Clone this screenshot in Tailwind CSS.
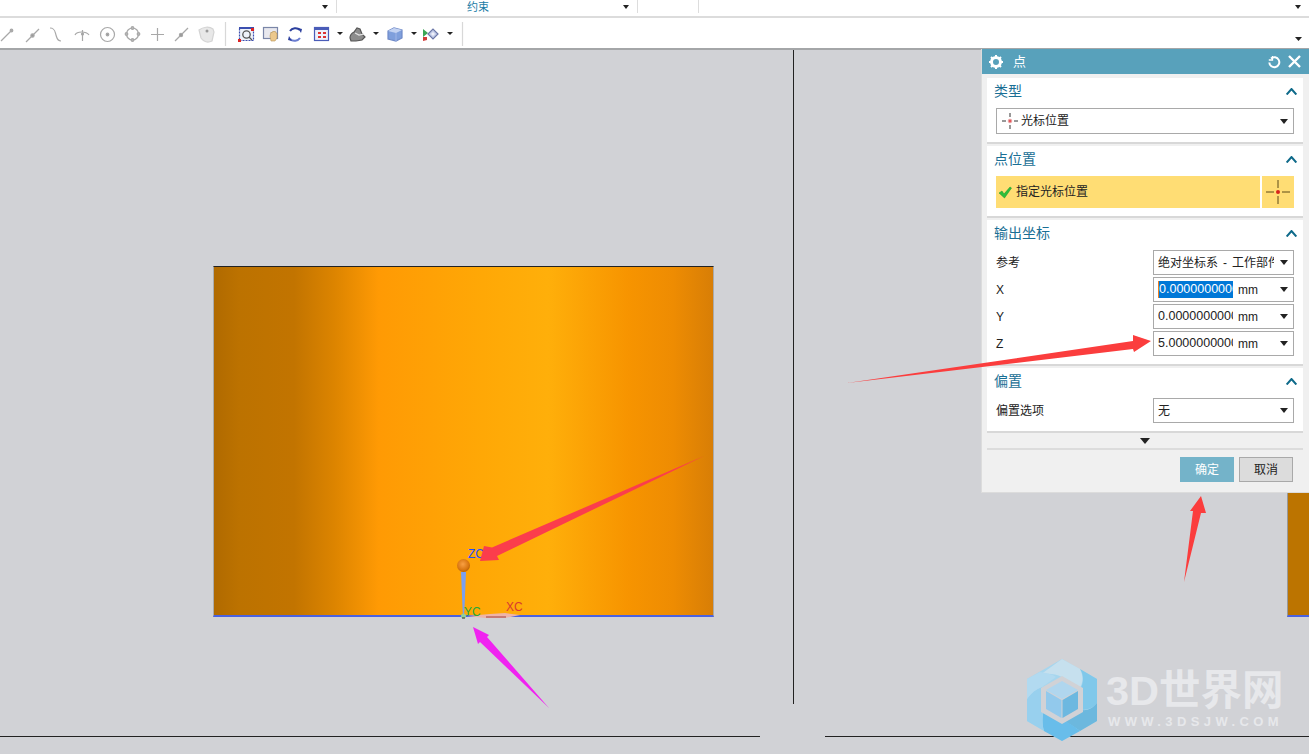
<!DOCTYPE html>
<html><head><meta charset="utf-8"><script src="https://cdn.jsdelivr.net/npm/@tailwindcss/browser@4"></script></head>
<body class="w-[1309px] h-[754px] overflow-hidden bg-[#d1d2d6] font-['Liberation_Sans','Noto_Sans_CJK_SC',sans-serif] text-[12px] text-[#222]">
<div class="relative w-[1309px] h-[754px] flex flex-col">
 <!-- ribbon -->
 <header class="h-[50px] bg-white border-b-2 border-[#a4a6a8] flex flex-col shrink-0">
  <div class="h-[18px] border-b-2 border-[#dcdcdc] flex text-[11px]">
   <div class="w-[337px] h-[13px] border-r border-[#ddd] flex items-center justify-end pr-[8px]"><svg width="6" height="4" viewBox="0 0 6 4"><path d="M0 0h6L3 4z" fill="#222"/></svg></div>
   <div class="w-[301px] h-[13px] border-r border-[#ddd] flex items-center justify-end pr-[8px] relative"><span class="absolute left-[130px] top-[1px] text-[#1b7ca6] leading-[13px]">约束</span><svg width="6" height="4" viewBox="0 0 6 4"><path d="M0 0h6L3 4z" fill="#222"/></svg></div>
   <div class="w-[61px] h-[13px] border-r border-[#ddd]"></div>
   <div class="flex-1 h-[13px] flex items-center justify-end pr-[8px]"><svg width="6" height="4" viewBox="0 0 6 4"><path d="M0 0h6L3 4z" fill="#222"/></svg></div>
  </div>
  <div class="flex-1 relative">
   <svg class="block" width="480" height="30" viewBox="0 0 480 30" fill="none" stroke="#a8a8a8" stroke-width="1.200">
    <g transform="translate(0,-18)">
     <path d="M1 41 12 30"/><circle cx="11.500" cy="30.500" r="1.300" fill="#aaa"/>
     <path d="M26 42 39 29"/><circle cx="32.500" cy="35.500" r="1.600" fill="#999"/>
     <path d="M50 28c5 0 5 4 6 7s1 6 5 6"/>
     <path d="M75 35c2-4 11-4 14 0M82.500 30v11"/><circle cx="82.500" cy="34" r="1" fill="#999"/>
     <circle cx="107.500" cy="34.500" r="7"/><circle cx="107.500" cy="34.500" r="1.300" fill="#999"/>
     <circle cx="132.500" cy="34" r="6"/><circle cx="132.500" cy="28" r="1.300" fill="#bbb"/><circle cx="132.500" cy="40" r="1.300" fill="#bbb"/><circle cx="126.500" cy="34" r="1.300" fill="#bbb"/><circle cx="138.500" cy="34" r="1.300" fill="#bbb"/>
     <path d="M151 34.500h13M157.500 28v13"/>
     <path d="M175 41 188 28"/><circle cx="181" cy="35" r="1.600" fill="#999"/>
     <path d="M199 30c4-3 10-4 14-1l1 3-2 9c-4 2-8 1-11-3z" fill="#e8e8e8" stroke="#d4d4d4"/><circle cx="207" cy="31" r="1.500" fill="#999" stroke="none"/>
     <path d="M225.500 22v24" stroke="#d8d8d8"/>
     <rect x="239.500" y="27.500" width="14" height="13" fill="#eef2fa" stroke="#3c4fb0" stroke-dasharray="2 1"/><rect x="239" y="27" width="15" height="2" fill="#3c4fb0" stroke="none"/><circle cx="246.500" cy="34.500" r="3.700" stroke="#555" stroke-width="1.300"/><path d="m249 37 3 3" stroke="#555" stroke-width="1.300"/><rect x="238" y="39" width="3" height="3" fill="#d22" stroke="none"/><rect x="251" y="28" width="3" height="3" fill="#d22" stroke="none"/>
     <rect x="263.500" y="27.500" width="14" height="11" fill="#e8e8ee" stroke="#7a86a8"/><path d="M270 36l1-4 1 1 1-2 1 1 1-1 1 2 1 0 0 5-2 3h-4z" fill="#ecc88c" stroke="#b99555" stroke-width=".6"/>
     <path d="M290 31c2-3 7-4 10-1" stroke="#2b3f9e" stroke-width="2"/><path d="M300 38c-2 3-7 4-10 1" stroke="#6a7dd0" stroke-width="2"/><path d="M298 28l4 1-1 4zM292 41l-4-1 1-4z" fill="#2b3f9e" stroke="none"/>
     <rect x="314.500" y="27.500" width="14" height="13" fill="#eef0fa" stroke="#4a5cb8"/><rect x="314" y="27" width="15" height="3" fill="#4a5cb8" stroke="none"/><path d="M318 32h3v2h-3zM323 32h3v2h-3zM318 36h3v2h-3zM323 36h3v2h-3z" fill="#d33" stroke="none"/>
     <path d="M337 32h6l-3 3z" fill="#222" stroke="none"/>
     <path d="M350 38c0-3 2-5 4-6l3-4 3 1 2 5 3 3-3 3-6 1h-5z" fill="#8c8c8c" stroke="#555"/><path d="M355 33l4 2 5-1" stroke="#e4e4e4"/>
     <path d="M373 32h6l-3 3z" fill="#222" stroke="none"/>
     <path d="M388 31l6-3 8 2v8l-6 3-8-2z" fill="#7f9fdc" stroke="#6f8ac8"/><path d="M388 31l8 2 6-3-8-2z" fill="#c4d3f2" stroke="none"/><path d="M396 33v8" stroke="#9bb2e4"/>
     <path d="M411 32h6l-3 3z" fill="#222" stroke="none"/>
     <path d="M423 29l5 4-5 4z" fill="#3aa655" stroke="none"/><path d="M423 37l4 0 0 3-4 1z" fill="#d23a3a" stroke="none"/><path d="M428 34l5-5 5 5-5 5z" fill="#c4cde8" stroke="#6c78a8"/><path d="M431 34l2-2 2 2-2 2z" fill="#eef0fa" stroke="none"/>
     <path d="M447 32h6l-3 3z" fill="#222" stroke="none"/>
     <path d="M462.500 22v24" stroke="#d8d8d8"/>
    </g>
   </svg>
   <svg class="absolute right-[7px] top-[19px]" width="7" height="4" viewBox="0 0 7 4"><path d="M0 0h7L3.500 4z" fill="#222"/></svg>
  </div>
 </header>

 <!-- viewport -->
 <main class="relative flex-1">
  <div class="absolute left-[213px] top-[216px] w-[501px] h-[351px] border-t border-t-[#222] border-x border-x-[#aaa] border-b-2 border-b-[#4a62e0] bg-[linear-gradient(90deg,#b06a00_0%,#bc7200_5%,#c27400_16%,#dc8400_24%,#ff9a04_33%,#ffa806_54%,#ffaf0a_67%,#f79400_83%,#ee8c02_92%,#d87e06_100%)]"></div>
  <div class="absolute left-[793px] top-0 w-px h-[654px] bg-[#222]"></div>
  <div class="absolute left-[1287px] top-[442px] w-[22px] h-[125px] border-l border-[#999] border-b-2 border-b-[#4a62e0] bg-[#bc7400]"></div>
  <div class="absolute left-0 top-[686px] w-[760px] h-px bg-[#222]"></div>
  <div class="absolute left-[825px] top-[686px] w-[484px] h-px bg-[#222]"></div>

  <!-- watermark -->
  <svg class="absolute left-[1026px] top-[609px]" width="72" height="82" viewBox="0 0 72 82">
   <path d="M36 0 71 20V62L36 82 1 62V20z" fill="#a6d6ee"/>
   <path d="M36 0 54 10C58 18 57 26 52 31L36 18C28 14 20 14 14 16z" fill="#c6e0ee"/>
   <path d="M54 10 71 20V44C66 50 60 52 52 50L54 30C58 24 58 16 54 10z" fill="#80c8ea"/>
   <path d="M71 44V62L54 72C46 66 38 62 34 60L52 50C60 53 66 50 71 44z" fill="#6cb8de"/>
   <path d="M54 72 36 82 18 72C16 66 16 58 18 50L34 60C42 63 48 67 54 72z" fill="#68bdea"/>
   <path d="M18 72 1 62V40C5 34 10 30 16 28L18 50C16 58 16 66 18 72z" fill="#98d0ee"/>
   <path d="M1 40V20L14 13C20 14 26 15 30 18L16 28C10 30 5 34 1 40z" fill="#b2daf0"/>
   <path d="M36 17 57 29V53L36 65 15 53V29z" fill="#d1d2d6"/>
   <path d="M36 22 52 31 36 40 20 31z" fill="#b0d6ee"/><path d="M20 32 35.500 41V59L20 50z" fill="#92c9ec"/><path d="M52 32 36.500 41V59L52 50z" fill="#6cb8e0"/>
  </svg>
  <div class="absolute left-[1106px] top-[617px] text-[41.500px] leading-[48px] font-bold text-[#e7e8eb] whitespace-nowrap">3D世界网</div>
  <div class="absolute left-[1108px] top-[664px] text-[13px] leading-[16px] font-bold tracking-[4.400px] text-[#e7e8eb] whitespace-nowrap">WWW.3DSJW.COM</div>

  <!-- triad -->
  <svg class="absolute left-0 top-0 pointer-events-none" width="1309" height="704" viewBox="0 50 1309 704">
   <defs><radialGradient id="b" cx=".45" cy=".4" r=".65"><stop offset="0" stop-color="#f9a043"/><stop offset=".7" stop-color="#d87510"/><stop offset="1" stop-color="#a85a08"/></radialGradient></defs>
   <path d="M461 572h5l-1.500 36-.5 8h-1l-.5-8z" fill="#7aa0ef"/>
   <circle cx="463.500" cy="565.500" r="6.500" fill="url(#b)"/>
   <path d="M467 616 490 614 505 613 520 615 505 618 485 618z" fill="#eeb4a8"/><path d="M486 617h20" stroke="#a04040" stroke-width="1"/>
   <circle cx="463.500" cy="616" r="2.500" fill="#8fcf9a"/><path d="M462 618h3" stroke="#333"/>
  </svg>
  <span class="absolute left-[468px] top-[497px] text-[12px] leading-[14px] text-[#1f4dff]">ZC</span>
  <span class="absolute left-[464px] top-[555px] text-[12px] leading-[14px] text-[#25a83a]">YC</span>
  <span class="absolute left-[506px] top-[550px] text-[12px] leading-[14px] text-[#d83a30]">XC</span>

  <!-- dialog -->
  <section class="absolute left-[981px] top-[-1px] w-[328px] h-[444px] bg-[#f0f0f0] border-l border-[#dcdcdc] border-b border-b-[#dcdcdc] z-10 flex flex-col">
   <div class="h-[25px] bg-[#58a1bb] flex items-center text-white text-[13px] pl-[7px] pr-[8px] shrink-0">
    <svg width="14" height="14" viewBox="0 0 14 14"><circle cx="7" cy="7" r="4.500" fill="none" stroke="#fff" stroke-width="3"/><path d="M7 0v2M7 12v2M0 7h2M12 7h2M2 2l1.500 1.500M10.500 10.500 12 12M12 2l-1.500 1.500M2 12l1.500-1.500" stroke="#fff" stroke-width="2"/></svg>
    <span class="ml-[10px]">点</span>
    <svg class="ml-auto" width="14" height="14" viewBox="0 0 14 14" fill="none" stroke="#fff" stroke-width="2"><path d="M4 3.500a5 5 0 1 1-1.700 4"/><path d="M5.500 1v4H1.800" stroke-width="1.300"/></svg>
    <svg class="ml-[7px]" width="13" height="13" viewBox="0 0 13 13" stroke="#fff" stroke-width="2.400"><path d="M1 1l11 11M12 1 1 12"/></svg>
   </div>
   <div class="flex flex-col pl-[5px] pr-[6px] pt-[4px] flex-1">
    <!-- 类型 -->
    <div class="h-[66px] bg-white border-b-2 border-[#d8d8d8] px-[9px] flex flex-col">
     <div class="h-[26px] flex items-center justify-between text-[#1a6f95] text-[14px] ml-[-2px] mr-[-3px]"><span>类型</span><svg width="11" height="7" viewBox="0 0 11 7" fill="none" stroke="#0f6a8a" stroke-width="2"><path d="M.7 6.500 5.500 1l4.800 5.500"/></svg></div>
     <div class="mt-[4px] h-[26px] w-[298px] border border-[#a9a9a9] flex items-center pl-[5px] pr-[5px]">
      <svg width="16" height="16" viewBox="0 0 16 16" stroke="#333"><path d="M0 8h4M12 8h4M8 0v4M8 12v4"/><circle cx="8" cy="8" r="1.800" fill="#e8555a" stroke="#e8a0a0"/></svg>
      <span class="ml-[3px]">光标位置</span>
      <svg class="ml-auto" width="8" height="5" viewBox="0 0 8 5"><path d="M0 0h8L4 5z" fill="#222"/></svg>
     </div>
    </div>
    <!-- 点位置 -->
    <div class="mt-[2px] h-[72px] bg-white border-b-2 border-[#d8d8d8] px-[9px] flex flex-col">
     <div class="h-[26px] flex items-center justify-between text-[#1a6f95] text-[14px] ml-[-2px] mr-[-3px]"><span>点位置</span><svg width="11" height="7" viewBox="0 0 11 7" fill="none" stroke="#0f6a8a" stroke-width="2"><path d="M.7 6.500 5.500 1l4.800 5.500"/></svg></div>
     <div class="mt-[4px] h-[32px] flex gap-[2px] w-[298px]">
      <div class="flex-1 bg-[#ffdd74] flex items-center pl-[2px]">
       <svg width="14" height="13" viewBox="0 0 14 13"><path d="M1 7l3-2 2 3 6-7 1.500 1-7 10z" fill="#2fbf3a" stroke="#14922a" stroke-width=".5"/></svg>
       <span class="ml-[4px]">指定光标位置</span>
      </div>
      <div class="w-[32px] bg-[#ffdd74] flex items-center justify-center"><svg width="26" height="26" viewBox="0 0 26 26" stroke="#5c4a18"><path d="M1 13h8M17 13h8M13 1v8M13 17v8"/><circle cx="13" cy="13" r="2" fill="#d8241c" stroke="none"/></svg></div>
     </div>
    </div>
    <!-- 输出坐标 -->
    <div class="mt-[2px] h-[146px] bg-white border-b-2 border-[#d8d8d8] px-[9px] flex flex-col">
     <div class="h-[26px] flex items-center justify-between text-[#1a6f95] text-[14px] ml-[-2px] mr-[-3px]"><span>输出坐标</span><svg width="11" height="7" viewBox="0 0 11 7" fill="none" stroke="#0f6a8a" stroke-width="2"><path d="M.7 6.500 5.500 1l4.800 5.500"/></svg></div>
     <div class="flex flex-col gap-[2px] mt-[4px]">
      <div class="flex items-center justify-between"><span>参考</span>
       <div class="w-[141px] h-[25px] border border-[#a9a9a9] flex items-center pl-[4px] pr-[5px] overflow-hidden"><span class="w-[116px] overflow-hidden whitespace-nowrap">绝对坐标系<span class="mx-[5px]">-</span>工作部件</span><svg class="ml-auto" width="8" height="5" viewBox="0 0 8 5"><path d="M0 0h8L4 5z" fill="#222"/></svg></div></div>
      <div class="flex items-center justify-between"><span>X</span>
       <div class="w-[141px] h-[25px] border border-[#a9a9a9] flex items-center pl-[4px] pr-[5px]"><span class="w-[75px] h-[17px] leading-[17px] overflow-hidden bg-[#0078d7] text-white border-l border-l-[#f08020] text-[12.500px] whitespace-nowrap">0.00000000000</span><span class="ml-[5px]">mm</span><svg class="ml-auto" width="8" height="5" viewBox="0 0 8 5"><path d="M0 0h8L4 5z" fill="#222"/></svg></div></div>
      <div class="flex items-center justify-between"><span>Y</span>
       <div class="w-[141px] h-[25px] border border-[#a9a9a9] flex items-center pl-[4px] pr-[5px]"><span class="w-[75px] overflow-hidden text-[12.500px] whitespace-nowrap">0.00000000000</span><span class="ml-[5px]">mm</span><svg class="ml-auto" width="8" height="5" viewBox="0 0 8 5"><path d="M0 0h8L4 5z" fill="#222"/></svg></div></div>
      <div class="flex items-center justify-between"><span>Z</span>
       <div class="w-[141px] h-[25px] border border-[#a9a9a9] flex items-center pl-[4px] pr-[5px]"><span class="w-[75px] overflow-hidden text-[12.500px] whitespace-nowrap">5.00000000000</span><span class="ml-[5px]">mm</span><svg class="ml-auto" width="8" height="5" viewBox="0 0 8 5"><path d="M0 0h8L4 5z" fill="#222"/></svg></div></div>
     </div>
    </div>
    <!-- 偏置 -->
    <div class="mt-[2px] h-[65px] bg-white border-b-2 border-[#d8d8d8] px-[9px] flex flex-col">
     <div class="h-[26px] flex items-center justify-between text-[#1a6f95] text-[14px] ml-[-2px] mr-[-3px]"><span>偏置</span><svg width="11" height="7" viewBox="0 0 11 7" fill="none" stroke="#0f6a8a" stroke-width="2"><path d="M.7 6.500 5.500 1l4.800 5.500"/></svg></div>
     <div class="flex items-center justify-between mt-[4px]"><span>偏置选项</span>
      <div class="w-[141px] h-[25px] border border-[#a9a9a9] flex items-center pl-[4px] pr-[5px]"><span>无</span><svg class="ml-auto" width="8" height="5" viewBox="0 0 8 5"><path d="M0 0h8L4 5z" fill="#222"/></svg></div></div>
    </div>
    <div class="h-[17px] border-b-2 border-[#dcdcdc] flex items-center justify-center pr-[1px] pt-[1px]"><svg width="10" height="6" viewBox="0 0 10 6"><path d="M0 0h10L5 6z" fill="#222"/></svg></div>
    <div class="flex justify-end gap-[5px] pr-[10px] mt-[7px]">
     <button class="w-[54px] h-[25px] bg-[#74b3c9] text-white text-[12px]">确定</button>
     <button class="w-[54px] h-[25px] bg-[#dcdcdc] border border-[#a9a9a9] text-[12px]">取消</button>
    </div>
   </div>
  </section>

  <!-- annotation arrows, drawn over everything -->
  <svg class="absolute left-0 top-0 z-20 pointer-events-none" width="1309" height="704" viewBox="0 50 1309 704">
   <path d="M704 456 492 547.500 484 546 480 561 499 560 497 556z" fill="#fb3d4c"/>
   <path d="M847 383 1133 341 1133 335 1151 341 1134 352 1133 349z" fill="#fb3d3d"/>
   <path d="M1184 582 1193 511 1190 511 1201 496 1206 513 1201 513z" fill="#fb3d3d"/>
   <path d="M549 708 480 642 478 644 473 627 489 635 487 637z" fill="#f023f0"/>
  </svg>
 </main>
</div>
</body></html>
